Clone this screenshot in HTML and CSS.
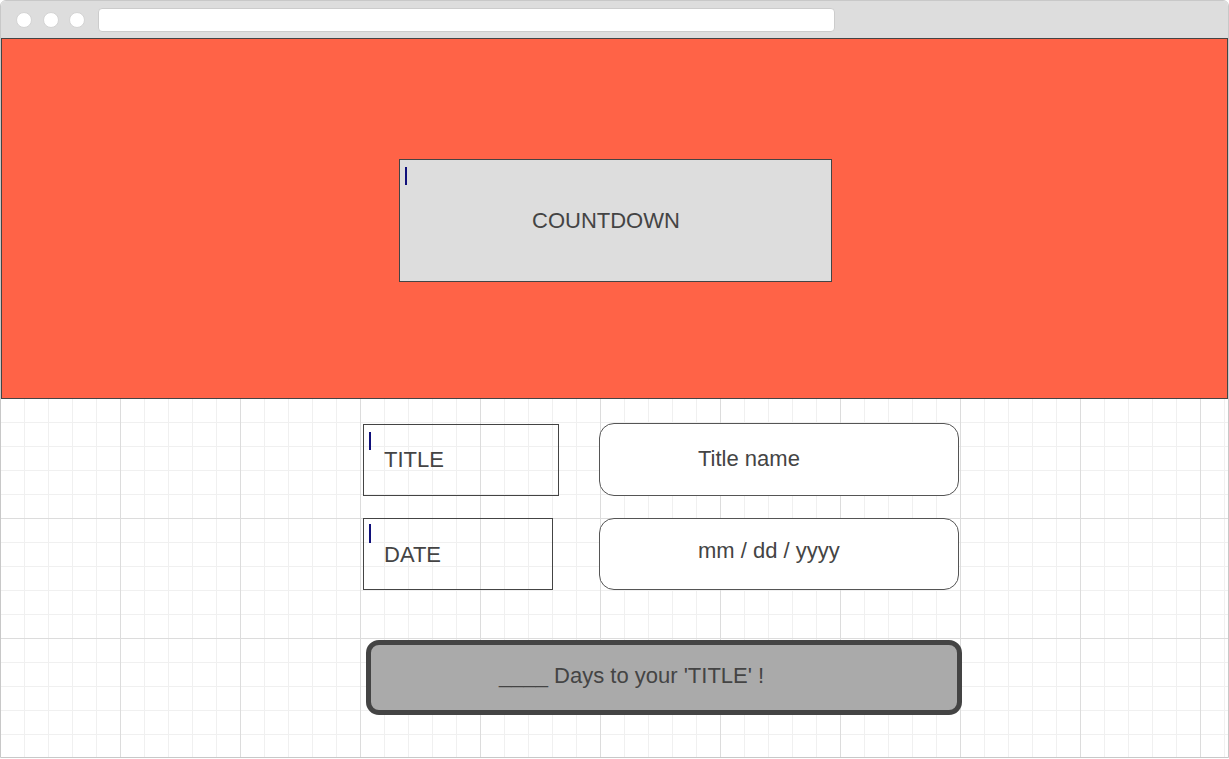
FILE: index.html
```html
<!DOCTYPE html>
<html lang="en">
<head>
<meta charset="utf-8">
<title>Countdown</title>
<link rel="stylesheet" href="styles.css">
</head>
<body>
<div class="window">
  <div class="chrome">
    <span class="dot"></span>
    <span class="dot"></span>
    <span class="dot"></span>
    <div class="address"></div>
  </div>
  <div class="canvas">
    <section class="hero">
      <div class="countdown"><span class="caret"></span>COUNTDOWN</div>
    </section>
    <div class="form">
      <div class="row row-title">
        <div class="label label-title"><span class="caret"></span>TITLE</div>
        <div class="field field-title">Title name</div>
      </div>
      <div class="row row-date">
        <div class="label label-date"><span class="caret"></span>DATE</div>
        <div class="field field-date">mm / dd / yyyy</div>
      </div>
      <div class="result">____ Days to your 'TITLE' !</div>
    </div>
  </div>
</div>
</body>
</html>
```

FILE: styles.css
```css
html, body {
  margin: 0;
  padding: 0;
  background: #fff;
}

body {
  font-family: "Liberation Sans", Arial, sans-serif;
}

.window {
  box-sizing: border-box;
  width: 1229px;
  height: 758px;
  border: 1px solid #c8c8c8;
  border-radius: 6px 6px 0 0;
  display: flex;
  flex-direction: column;
  overflow: hidden;
}

.chrome {
  flex: 0 0 37px;
  background: #dddddd;
  display: flex;
  align-items: center;
  padding-left: 15px;
}

.dot {
  box-sizing: border-box;
  width: 16px;
  height: 16px;
  border-radius: 50%;
  background: #fff;
  border: 1px solid #d4d4d4;
  margin-right: 10.5px;
}

.address {
  box-sizing: border-box;
  margin-left: 2px;
  width: 737px;
  height: 24px;
  background: #fff;
  border: 1px solid #cccccc;
  border-radius: 4px;
}

.canvas {
  flex: 1;
  background-color: #fff;
  background-image:
    linear-gradient(to right, #dcdcdc 1px, transparent 1px),
    linear-gradient(to bottom, #dcdcdc 1px, transparent 1px),
    linear-gradient(to right, #f0f0f0 1px, transparent 1px),
    linear-gradient(to bottom, #f0f0f0 1px, transparent 1px);
  background-size: 120px 120px, 120px 120px, 24px 24px, 24px 24px;
  background-position: 119px 0, 0 0, 23px 0, 0 0;
}

.hero {
  box-sizing: border-box;
  height: 361px;
  background: #ff6347;
  border: 1px solid #444;
  padding: 120px 0 0 397px;
}

.countdown {
  position: relative;
  box-sizing: border-box;
  width: 433px;
  height: 123px;
  background: #dddddd;
  border: 1px solid #444;
  color: #444;
  font-size: 22px;
  line-height: 25px;
  padding: 48px 0 0 132px;
}

.caret {
  position: absolute;
  left: 5px;
  top: 7px;
  width: 1.6px;
  height: 18px;
  background: #10107a;
}

.form {
  padding: 24px 0 0 362px;
}

.row {
  display: grid;
  grid-template-columns: 236px 360px;
  align-items: start;
}

.row-date {
  margin-top: 22px;
}

.label {
  position: relative;
  box-sizing: border-box;
  height: 72px;
  border: 1px solid #444;
  color: #444;
  font-size: 22px;
  line-height: 25px;
  padding-left: 20px;
}

.label-title {
  width: 196px;
  margin-top: 1px;
  padding-top: 22px;
}

.label-date {
  width: 190px;
  padding-top: 23px;
}

.label-date .caret {
  top: 5px;
  height: 19px;
}

.field {
  box-sizing: border-box;
  width: 360px;
  background: #fff;
  border: 1px solid #555;
  border-radius: 15px;
  color: #444;
  font-size: 22px;
  line-height: 25px;
  padding-left: 98px;
}

.field-title {
  height: 73px;
  padding-top: 22px;
}

.field-date {
  height: 72px;
  padding-top: 19px;
}

.result {
  box-sizing: border-box;
  width: 596px;
  height: 75px;
  margin: 50px 0 0 3px;
  background: #aaaaaa;
  border: 5px solid #444;
  border-radius: 13px;
  color: #444;
  font-size: 22px;
  line-height: 25px;
  padding: 18px 0 0 128px;
}
```
